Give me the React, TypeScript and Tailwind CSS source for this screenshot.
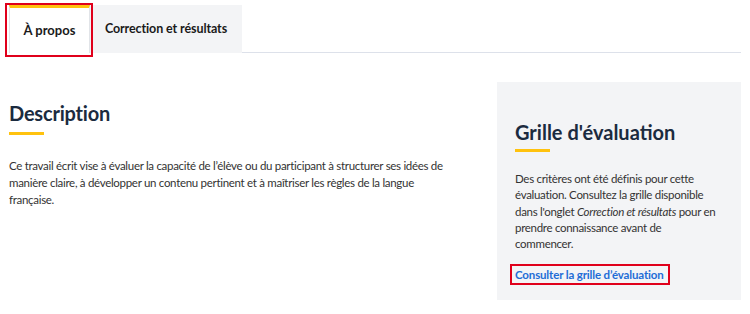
const font = { fontFamily: 'Lato, "Noto Sans", sans-serif' };

export default function App() {
  return (
    <div className="relative h-[314px] w-[750px] overflow-hidden bg-white" style={font}>
      {/* onglets */}
      <div className="mr-[9px] flex pl-[9px] pt-[5px]">
        <div className="flex h-[48px] w-[81px] items-center justify-center border-x border-t-[3px] border-x-[#e1e4e8] border-t-[#ffc20e] bg-white text-[13px] font-bold text-[#1a1a1a]">
          À propos
        </div>
        <div className="flex h-[48px] w-[152px] items-center justify-center bg-[#f3f4f6] text-[12.5px] font-bold tracking-[-0.1px] text-[#1a1a1a]">
          Correction et résultats
        </div>
        <div className="flex-1 border-b border-[#dde1ea]" />
      </div>

      <div className="flex pt-[29px]">
        <div className="w-[497px] pl-[9px] pt-[19px]">
          <h2 className="text-[20px] leading-[24px] font-bold tracking-[-0.2px] text-[#1b2b3f]">Description</h2>
          <div className="mt-[7px] h-[3px] w-[35px] bg-[#ffc20e]" />
          <p className="mt-[22px] w-[450px] text-[11.5px] leading-[17px] tracking-[-0.3px] text-[#333]">
            Ce travail écrit vise à évaluer la capacité de l’élève ou du participant à structurer ses idées de
            manière claire, à développer un contenu pertinent et à maîtriser les règles de la langue française.
          </p>
        </div>

        <div className="h-[218px] w-[244px] bg-[#f3f4f6] pl-[18px] pr-[14px] pt-[38px]">
          <h2 className="text-[20px] leading-[24px] font-bold text-[#1b2b3f]">Grille d'évaluation</h2>
          <div className="mt-[5px] h-[3px] w-[35px] bg-[#ffc20e]" />
          <p className="mt-[19px] text-[11.5px] leading-[16.3px] tracking-[-0.3px] text-[#333]">
            Des critères ont été définis pour cette évaluation. Consultez la grille disponible dans l'onglet{' '}
            <em>Correction et résultats</em> pour en prendre connaissance avant de
            <br />
            commencer.
          </p>
          <a className="mt-[14px] inline-block text-[11.5px] font-bold tracking-[-0.15px] text-[#1f6dd6]" href="#">
            Consulter la grille d’évaluation
          </a>
        </div>
      </div>

      {/* cadres rouges d'annotation */}
      <div className="pointer-events-none absolute left-[5px] top-[3px] h-[54px] w-[88px] border-2 border-[#e0001b]" />
      <div className="pointer-events-none absolute left-[510px] top-[264px] h-[21px] w-[160px] border-2 border-[#e0001b]" />
    </div>
  );
}
